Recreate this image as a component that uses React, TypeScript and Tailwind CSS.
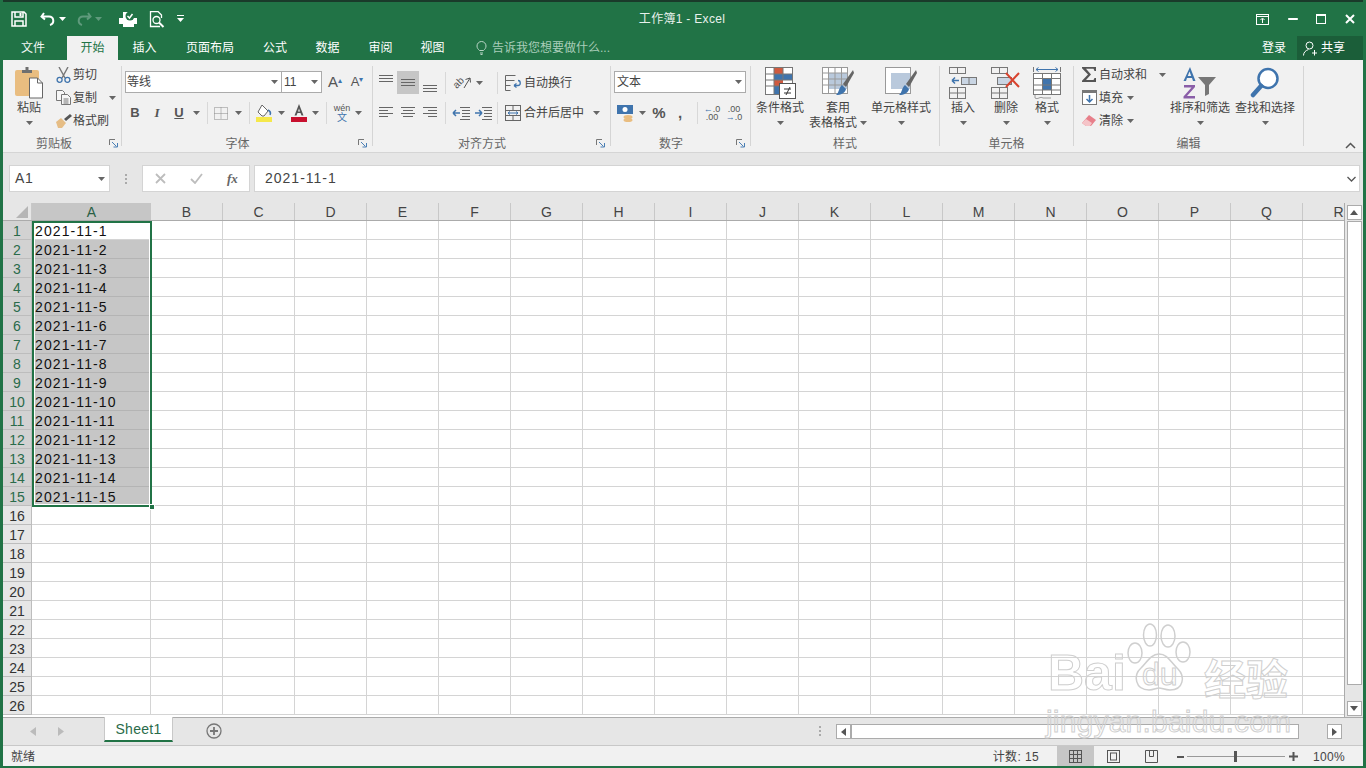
import React from "react";

const columns = ["B", "C", "D", "E", "F", "G", "H", "I", "J", "K", "L", "M", "N", "O", "P", "Q", "R"];
const rows = Array.from({ length: 26 }, (_, i) => i + 1);

function Caret({ className = "text-[#666]" }: { className?: string }) {
  return (
    <svg width="7" height="4" viewBox="0 0 7 4" className={className}>
      <path d="M0 0h7L3.5 4z" fill="currentColor" />
    </svg>
  );
}

function Sep({ className = "" }: { className?: string }) {
  return <div className={`w-px h-[22px] bg-[#d8d8d8] ${className}`} />;
}

function GroupSep() {
  return <div className="w-px my-[6px] bg-[#d5d5d5] shrink-0" />;
}

function Launcher() {
  return (
    <svg width="9" height="9" viewBox="0 0 9 9" fill="none" stroke="#777">
      <path d="M.5 6V.5H6" />
      <path d="M3 3l4.5 4.5M4.5 8h4V4" stroke="#4a7fb5" />
    </svg>
  );
}

function GroupLabel({ text, launcher = "" }: { text: string; launcher?: string }) {
  return (
    <div className="h-[17px] flex items-center shrink-0">
      <div className="flex-1 text-center text-[12px] leading-[16px] text-[#666]">{text}</div>
      {launcher && <div className={`${launcher} flex justify-center`}><Launcher /></div>}
    </div>
  );
}

function LargeButton({ width, icon, label, second, className = "" }: { width: string; icon: React.ReactNode; label: string; second?: string; className?: string }) {
  return (
    <div className={`${width} ${className} flex flex-col items-center shrink-0 pt-[7px]`}>
      <div className="h-[32px] flex items-center justify-center">{icon}</div>
      <div className="mt-[1px] text-[12px] leading-[16px] text-[#444] whitespace-nowrap">{label}</div>
      <div className="h-[14px] flex items-center gap-[3px] text-[12px] text-[#444] whitespace-nowrap">
        {second}
        <Caret />
      </div>
    </div>
  );
}

function SmallButton({ icon, label, caret, gap = "ml-[12px]" }: { icon: React.ReactNode; label: string; caret?: boolean; gap?: string }) {
  return (
    <div className="h-[23px] flex items-center">
      <div className="w-[18px] flex justify-center">{icon}</div>
      <span className="ml-[1px] text-[12px] leading-[16px] text-[#444] whitespace-nowrap">{label}</span>
      {caret && <span className={`${gap} flex`}><Caret /></span>}
    </div>
  );
}

function Lines({ d }: { d: string }) {
  return (
    <svg width="16" height="14" viewBox="0 0 16 14" fill="none" stroke="#666">
      <path d={d} />
    </svg>
  );
}

function SaveIcon() {
  return (
    <svg width="16" height="16" viewBox="0 0 16 16" fill="none" stroke="#fff" strokeWidth="1.5">
      <path d="M1 1h12l2 2v12H1z" />
      <path d="M4 1v5h8V1M4 15v-5h8v5" />
      <rect x="8.5" y="2" width="2" height="3" fill="#fff" stroke="none" />
    </svg>
  );
}

function PasteIcon() {
  return (
    <svg width="30" height="33" viewBox="0 0 30 33">
      <rect x="1" y="3" width="24" height="26" rx="2" fill="#e9bd80" />
      <path d="M8 6V3h3.5V0h3v3H18v3z" fill="#6f6f6f" />
      <path d="M15.5 11h8l5 5v15h-13z" fill="#fff" stroke="#666" />
      <path d="M23.5 11v5h5" fill="none" stroke="#666" />
    </svg>
  );
}

function ScissorsIcon() {
  return (
    <svg width="15" height="16" viewBox="0 0 15 16" fill="none">
      <path d="M3 0l6 11M12 0L6 11" stroke="#777" strokeWidth="1.4" />
      <circle cx="3.6" cy="12.8" r="2.5" stroke="#3f74ad" strokeWidth="1.3" />
      <circle cx="11.4" cy="12.8" r="2.5" stroke="#3f74ad" strokeWidth="1.3" />
    </svg>
  );
}

function CopyIcon() {
  return (
    <svg width="15" height="15" viewBox="0 0 15 15" fill="#f7f7f7" stroke="#777">
      <path d="M.5.5h6l2 2v8h-8z" />
      <path d="M5.5 4.5h6l3 3v7h-9z" />
      <path d="M7.5 9h5M7.5 11h5M7.5 13h5" />
    </svg>
  );
}

function BrushIcon() {
  return (
    <svg width="17" height="14" viewBox="0 0 17 14">
      <path d="M1 8l5-4 5 5-4 5H3z" fill="#e6bd85" />
      <path d="M9 5l6-5 2 2-6 5z" fill="#555" />
    </svg>
  );
}

function FillIcon() {
  return (
    <svg width="18" height="18" viewBox="0 0 18 18" fill="none">
      <path d="M7 1l6 6-4 5H7L3 8z" fill="#fff" stroke="#666" />
      <path d="M13 6c2 1 3 3 2 5" stroke="#3f74ad" strokeWidth="1.5" />
      <rect x="1" y="13" width="16" height="5" fill="#f5e84a" />
    </svg>
  );
}

function FontColorIcon() {
  return (
    <svg width="16" height="18" viewBox="0 0 16 18">
      <path d="M8 0l4.5 11.5h-2L9.5 9h-3l-1 2.5h-2zM7 7.4h2L8 4.5z" fill="#555" />
      <rect x="0" y="13" width="16" height="5" fill="#c8102e" />
    </svg>
  );
}

function WrapIcon() {
  return (
    <svg width="17" height="16" viewBox="0 0 17 16" fill="none" stroke="#666">
      <path d="M.5.5h10M.5 5.5h9M.5 10.5h5M.5.5v15h5" />
      <path d="M9 10.5h4c3 0 3-5 0-5" stroke="#3f74ad" strokeWidth="1.3" />
      <path d="M9 10.5l2.5-2M9 10.5l2.5 2" stroke="#3f74ad" strokeWidth="1.3" />
    </svg>
  );
}

function MergeIcon() {
  return (
    <svg width="16" height="16" viewBox="0 0 16 16" fill="none" stroke="#666">
      <rect x=".5" y=".5" width="15" height="15" />
      <path d="M.5 5.5h15M.5 10.5h15M8 .5v5M8 10.5v5" />
      <path d="M3 8h10M3 8l2-1.500M3 8l2 1.500M13 8l-2-1.500M13 8l-2 1.500" stroke="#3f74ad" />
    </svg>
  );
}

function CondIcon() {
  return (
    <svg width="31" height="32" viewBox="0 0 31 32" fill="none">
      <rect x=".5" y=".5" width="27" height="27" fill="#fff" stroke="#777" />
      <rect x="9" y="1" width="9" height="6" fill="#cf5a3f" />
      <rect x="9" y="7" width="18" height="6" fill="#3f74ad" />
      <rect x="9" y="13" width="9" height="6" fill="#cf5a3f" />
      <rect x="9" y="19" width="6" height="8" fill="#3f74ad" />
      <path d="M9 .5v27M18 .5v12M.5 7h27M.5 13h27M.5 19h14" stroke="#777" />
      <rect x="14.500" y="16.500" width="16" height="15" fill="#fff" stroke="#555" />
      <path d="M19 22h7M19 26h7M25 20l-4 8" stroke="#333" />
    </svg>
  );
}

function TableStyleIcon({ plain }: { plain?: boolean }) {
  return (
    <svg width="32" height="32" viewBox="0 0 32 32" fill="none">
      <rect x=".5" y=".5" width="25" height="26" fill="#fff" stroke="#999" />
      <rect x="6" y="6" width="19" height="16" fill="#b9c9dc" />
      {!plain && <path d="M.5 6h25M.5 12h25M.5 18h25M6.500.5v26M13 .5v26M19.500.5v26" stroke="#999" />}
      <path d="M31 3L21 17l3 3L32 6z" fill="#666" />
      <path d="M20 18l4 4c-1 4-5 6-10 6 3-2 3-8 6-10z" fill="#3f74ad" />
    </svg>
  );
}

function InsertIcon() {
  return (
    <svg width="28" height="32" viewBox="0 0 28 32" fill="none" stroke="#777">
      <rect x=".5" y=".5" width="16" height="6" />
      <path d="M8.500.5v6" />
      <path d="M10 13.500H3M3 13.500l3-3M3 13.500l3 3" stroke="#3f74ad" strokeWidth="1.500" />
      <rect x="12.500" y="10.500" width="15" height="7" fill="#c9d5e3" />
      <path d="M20 10.500v7" />
      <rect x=".5" y="20.500" width="16" height="11" />
      <path d="M8.500 20.500v11M.5 26h16" />
    </svg>
  );
}

function DeleteIcon() {
  return (
    <svg width="30" height="32" viewBox="0 0 30 32" fill="none" stroke="#777">
      <rect x=".5" y=".5" width="16" height="6" />
      <path d="M8.500.5v6" />
      <rect x="6.500" y="10.500" width="14" height="7" fill="#c9d5e3" />
      <rect x=".5" y="20.500" width="16" height="11" />
      <path d="M8.500 20.500v11M.5 26h16" />
      <path d="M15 6l13 14M28 6L15 20" stroke="#d8432e" strokeWidth="2" />
    </svg>
  );
}

function FormatIcon() {
  return (
    <svg width="28" height="33" viewBox="0 0 28 33" fill="none" stroke="#777">
      <path d="M.5 0v5M27.500 0v5" />
      <path d="M3 2.500h22M3 2.500l2.500-2M3 2.500l2.500 2M25 2.500l-2.500-2M25 2.500l-2.500 2" stroke="#3f74ad" />
      <rect x=".5" y="6.500" width="27" height="21" fill="#fff" />
      <rect x="10" y="11" width="8" height="12" fill="#3f74ad" stroke="none" />
      <path d="M.5 11.500h27M.5 18h27M.5 23h27M9.500 6.500v21M18.500 6.500v21" />
      <path d="M2 28v3c3 2 5-2 8 0l8 0" stroke="#999" />
    </svg>
  );
}

function SortIcon() {
  return (
    <svg width="34" height="33" viewBox="0 0 34 33">
      <path d="M7 0l5.500 14h-2.500l-1-3H4l-1 3H.5zM4.800 9h3.400L6.500 4.500z" fill="#3f74ad" />
      <path d="M1 18h11v2l-8 9h8v2.500H.5v-2l8-9H1z" fill="#8a5ea8" />
      <path d="M15 10h18l-7 8v9l-4 2V18z" fill="#777" />
    </svg>
  );
}

function SearchIcon() {
  return (
    <svg width="30" height="32" viewBox="0 0 30 32" fill="none">
      <circle cx="18" cy="11.500" r="9.500" stroke="#3f74ad" strokeWidth="2.500" fill="#fff" />
      <path d="M11 19L3 28" stroke="#3f74ad" strokeWidth="4.500" strokeLinecap="round" />
    </svg>
  );
}

function Ribbon() {
  return (
    <div className="h-[93px] bg-[#f1f1f1] flex shrink-0 border-b border-[#d5d5d5]">
      {/* clipboard */}
      <div className="w-[118px] flex flex-col shrink-0">
        <div className="h-[75px] flex">
          <LargeButton width="w-[50px]" icon={<PasteIcon />} label="粘贴" className="ml-[1px]" />
          <div className="pt-[3px]">
            <SmallButton icon={<ScissorsIcon />} label="剪切" />
            <SmallButton icon={<CopyIcon />} label="复制" caret />
            <SmallButton icon={<BrushIcon />} label="格式刷" />
          </div>
        </div>
        <GroupLabel text="剪贴板" launcher="w-[16px]" />
      </div>
      <GroupSep />
      {/* font */}
      <div className="w-[250px] flex flex-col shrink-0">
        <div className="h-[75px] pt-[11px]">
          <div className="flex items-center h-[22px] pl-[3px]">
            <div className="w-[157px] h-[22px] bg-white border border-[#ababab] flex items-center justify-between pl-[1px] pr-[3px] text-[12px] text-[#444]">
              等线
              <Caret />
            </div>
            <div className="w-[41px] h-[22px] -ml-px bg-white border border-[#ababab] flex items-center justify-between pl-[2px] pr-[3px] text-[12px] text-[#444]">
              11
              <Caret />
            </div>
            <div className="w-[24px] ml-[1px] text-center text-[15px] leading-[16px] text-[#555]">A<sup className="text-[#3f74ad] text-[8px]">▴</sup></div>
            <div className="w-[20px] text-center text-[13px] leading-[16px] text-[#555]">A<sup className="text-[#3f74ad] text-[8px]">▾</sup></div>
          </div>
          <div className="flex items-center h-[22px] mt-[9px] pl-[2px] text-[#555]">
            <div className="w-[22px] text-center font-bold text-[13px]">B</div>
            <div className="w-[22px] text-center italic font-['Liberation_Serif',serif] font-bold text-[13px]">I</div>
            <div className="w-[22px] text-center underline font-bold text-[13px]">U</div>
            <div className="w-[12px] flex justify-center"><Caret /></div>
            <Sep className="ml-[5px]" />
            <div className="w-[20px] ml-[3px] flex justify-center">
              <svg width="14" height="13" viewBox="0 0 14 13" fill="none" stroke="#888" strokeDasharray="1 1"><rect x=".5" y=".5" width="13" height="12" /><path d="M7 .5v12M.5 6.500h13" /></svg>
            </div>
            <div className="w-[14px] flex justify-center"><Caret /></div>
            <Sep className="ml-[4px]" />
            <div className="w-[20px] ml-[4px] flex justify-center"><FillIcon /></div>
            <div className="w-[14px] flex justify-center"><Caret /></div>
            <div className="w-[20px] ml-[1px] flex justify-center"><FontColorIcon /></div>
            <div className="w-[12px] flex justify-center"><Caret /></div>
            <Sep className="ml-[5px]" />
            <div className="w-[20px] ml-[5px] flex flex-col items-center leading-none">
              <span className="text-[9px] leading-[9px] text-[#555]">wén</span>
              <span className="text-[10px] leading-[10px] text-[#3f74ad]">文</span>
            </div>
            <div className="w-[12px] flex justify-center"><Caret /></div>
          </div>
        </div>
        <GroupLabel text="字体" launcher="w-[19px]" />
      </div>
      <GroupSep />
      {/* alignment */}
      <div className="w-[237px] flex flex-col shrink-0">
        <div className="h-[75px] pt-[11px]">
          <div className="flex items-center h-[23px] pl-[2px]">
            <div className="w-[22px] h-[23px] flex justify-center pt-[3px]"><Lines d="M1 1.500h14M1 4.500h14M1 7.500h14" /></div>
            <div className="w-[22px] h-[23px] flex justify-center items-center bg-[#c6c6c6]"><Lines d="M1 3.500h14M1 6.500h14M1 9.500h14" /></div>
            <div className="w-[22px] h-[23px] flex justify-center items-end pb-[1px]"><Lines d="M1 6.500h14M1 9.500h14M1 12.500h14" /></div>
            <Sep className="ml-[4px]" />
            <div className="w-[24px] ml-[4px] flex justify-center items-center">
              <span className="-rotate-45 text-[10px] leading-[10px] text-[#555]">ab</span>
              <svg width="8" height="12" viewBox="0 0 8 12" fill="none" stroke="#555" className="-ml-[1px]"><path d="M1 11L7 1M7 1L2.500 2.500M7 1l.5 4.500" /></svg>
            </div>
            <div className="w-[10px] flex justify-center"><Caret /></div>
            <Sep className="ml-[13px]" />
            <div className="w-[18px] ml-[6px] flex justify-center"><WrapIcon /></div>
            <span className="ml-[2px] text-[12px] leading-[16px] text-[#444] whitespace-nowrap">自动换行</span>
          </div>
          <div className="flex items-center h-[22px] mt-[8px] pl-[2px]">
            <div className="w-[22px] flex justify-center"><Lines d="M1 1.500h14M1 4.500h9M1 7.500h14M1 10.500h9" /></div>
            <div className="w-[22px] flex justify-center"><Lines d="M1 1.500h14M3 4.500h10M1 7.500h14M3 10.500h10" /></div>
            <div className="w-[22px] flex justify-center"><Lines d="M1 1.500h14M6 4.500h9M1 7.500h14M6 10.500h9" /></div>
            <Sep className="ml-[4px]" />
            <div className="w-[22px] ml-[4px] flex justify-center">
              <svg width="18" height="14" viewBox="0 0 18 14" fill="none" stroke="#666"><path d="M8 1.500h10M10 4.500h8M10 7.500h8M10 10.500h8M8 13.500h10" /><path d="M8 7H1M1 7l3-3M1 7l3 3" stroke="#3f74ad" strokeWidth="1.500" /></svg>
            </div>
            <div className="w-[22px] flex justify-center">
              <svg width="18" height="14" viewBox="0 0 18 14" fill="none" stroke="#666"><path d="M8 1.500h10M10 4.500h8M10 7.500h8M10 10.500h8M8 13.500h10" /><path d="M1 7h7M8 7L5 4M8 7l-3 3" stroke="#3f74ad" strokeWidth="1.500" /></svg>
            </div>
            <Sep className="ml-[3px]" />
            <div className="w-[18px] ml-[6px] flex justify-center"><MergeIcon /></div>
            <span className="ml-[2px] text-[12px] leading-[16px] text-[#444] whitespace-nowrap">合并后居中</span>
            <div className="ml-[9px] flex"><Caret /></div>
          </div>
        </div>
        <GroupLabel text="对齐方式" launcher="w-[19px]" />
      </div>
      <GroupSep />
      {/* number */}
      <div className="w-[139px] flex flex-col shrink-0">
        <div className="h-[75px] pt-[11px]">
          <div className="ml-[3px] w-[132px] h-[22px] bg-white border border-[#ababab] flex items-center justify-between pl-[2px] pr-[3px] text-[12px] text-[#444]">
            文本
            <Caret />
          </div>
          <div className="flex items-center h-[22px] mt-[9px] pl-[4px]">
            <div className="w-[22px] flex justify-center">
              <svg width="18" height="18" viewBox="0 0 18 18"><rect x="0" y="1" width="16" height="9" fill="#3f74ad" /><circle cx="8" cy="5.500" r="2.500" fill="#fff" /><ellipse cx="11" cy="13" rx="4.500" ry="2" fill="#e9bd80" /><ellipse cx="11" cy="16" rx="4.500" ry="2" fill="#e9bd80" /></svg>
            </div>
            <div className="w-[10px] flex justify-center"><Caret /></div>
            <div className="w-[24px] text-center font-bold text-[15px] leading-[18px] text-[#555]">%</div>
            <div className="w-[20px] -ml-[1px] text-center font-bold text-[15px] leading-[14px] text-[#555]">,</div>
            <Sep className="ml-[7px]" />
            <div className="w-[22px] ml-[3px] flex flex-col items-center text-[9px] leading-[8px] text-[#555]">
              <span><span className="text-[#3f74ad]">←</span>.0</span>
              <span>.00</span>
            </div>
            <div className="w-[22px] flex flex-col items-center text-[9px] leading-[8px] text-[#555]">
              <span>.00</span>
              <span><span className="text-[#3f74ad]">→</span>.0</span>
            </div>
          </div>
        </div>
        <GroupLabel text="数字" launcher="w-[19px]" />
      </div>
      <GroupSep />
      {/* styles */}
      <div className="w-[188px] flex flex-col shrink-0">
        <div className="h-[75px] flex">
          <LargeButton width="w-[58px]" icon={<CondIcon />} label="条件格式" />
          <LargeButton width="w-[58px]" icon={<TableStyleIcon />} label="套用" second="表格格式" />
          <LargeButton width="w-[68px]" icon={<TableStyleIcon plain />} label="单元格样式" />
        </div>
        <GroupLabel text="样式" />
      </div>
      <GroupSep />
      {/* cells */}
      <div className="w-[133px] flex flex-col shrink-0">
        <div className="h-[75px] flex">
          <LargeButton width="w-[46px]" icon={<InsertIcon />} label="插入" />
          <LargeButton width="w-[40px]" icon={<DeleteIcon />} label="删除" />
          <LargeButton width="w-[42px]" icon={<FormatIcon />} label="格式" />
        </div>
        <GroupLabel text="单元格" />
      </div>
      <GroupSep />
      {/* editing */}
      <div className="w-[229px] flex flex-col shrink-0">
        <div className="h-[75px] flex">
          <div className="w-[96px] pt-[3px] pl-[6px] shrink-0">
            <SmallButton
              icon={<svg width="15" height="15" viewBox="0 0 15 15"><path d="M0 0h14v4h-1.500l-1-2.300H4l5 5.800L4 13h7.500l1-2h1.500v4H0v-1.200L6 7.500 0 1.200z" fill="#555" /></svg>}
              label="自动求和"
              caret
            />
            <SmallButton
              icon={<svg width="15" height="15" viewBox="0 0 15 15" fill="none"><rect x=".5" y=".5" width="14" height="14" fill="#fff" stroke="#777" /><rect x="0" y="0" width="15" height="3" fill="#777" /><path d="M7.500 5v7M4.500 9l3 3 3-3" stroke="#3f74ad" strokeWidth="1.500" /></svg>}
              label="填充"
              caret
              gap="ml-[4px]"
            />
            <SmallButton
              icon={<svg width="16" height="14" viewBox="0 0 16 14"><path d="M8 1l7 5-5 6H5L1 9z" fill="#e77f8a" /><path d="M1 9l4-4 6 4-2 3H5z" fill="#f5c4c8" /></svg>}
              label="清除"
              caret
              gap="ml-[4px]"
            />
          </div>
          <LargeButton width="w-[60px]" icon={<SortIcon />} label="排序和筛选" />
          <LargeButton width="w-[64px]" icon={<SearchIcon />} label="查找和选择" className="ml-[3px]" />
        </div>
        <GroupLabel text="编辑" />
      </div>
      <GroupSep />
      <div className="flex-1 flex items-end justify-end pr-[7px] pb-[3px]">
        <svg width="11" height="7" viewBox="0 0 11 7" fill="none" stroke="#555" strokeWidth="1.500"><path d="M1 6l4.500-4.500L10 6" /></svg>
      </div>
    </div>
  );
}

function Sheet() {
  return (
    <div className="relative flex-1 min-w-0 overflow-hidden bg-white">
      <div className="flex h-[18px] bg-[#e6e6e6] border-b border-[#ababab]">
        <div className="w-[29px] shrink-0 flex items-end justify-end pr-[3px] pb-[2px] border-r border-[#c8c8c8]">
          <svg width="12" height="12" viewBox="0 0 12 12"><path d="M12 0v12H0z" fill="#b5b5b5" /></svg>
        </div>
        <div className="w-[119px] shrink-0 bg-[#c6c6c6] text-center text-[14px] leading-[18px] text-[#2a5f45]">A</div>
        {columns.map((c) => (
          <div key={c} className="w-[72px] shrink-0 border-r border-[#c8c8c8] text-center text-[14px] leading-[18px] text-[#444]">
            {c}
          </div>
        ))}
      </div>
      {rows.map((r) => {
        const selected = r <= 15;
        return (
          <div key={r} className="flex h-[19px]">
            <div className={`w-[29px] shrink-0 border-b border-r border-[#bdbdbd] text-center text-[14px] leading-[20px] ${selected ? "bg-[#d2d2d2] text-[#2a6b4a]" : "bg-[#e6e6e6] text-[#333]"}`}>
              {r}
            </div>
            <div className={`w-[119px] shrink-0 border-b border-r pl-[3px] text-[14px] leading-[21px] tracking-[1.1px] text-[#111] ${selected && r > 1 ? "bg-[#c6c6c6] border-[#b4b4b4]" : "border-[#d4d4d4]"}`}>
              {selected ? `2021-11-${r}` : ""}
            </div>
            {columns.map((c) => (
              <div key={c} className="w-[72px] shrink-0 border-b border-r border-[#d4d4d4]" />
            ))}
          </div>
        );
      })}
      {/* selection frame */}
      <div className="absolute left-[29px] top-[18px] w-[120px] h-[286px] border-2 border-[#217346] shadow-[inset_0_0_0_1px_#fff] pointer-events-none" />
      <div className="absolute left-[146px] top-[301px] w-[6px] h-[6px] bg-[#217346] border border-white" />
    </div>
  );
}

function Watermark() {
  return (
    <div className="absolute left-[1042px] top-[618px] w-[256px] h-[124px] pointer-events-none font-['Liberation_Sans',sans-serif]">
      <svg width="90" height="76" viewBox="0 0 90 76" fill="none" stroke="#cfcfcf" strokeWidth="1.500" className="absolute left-[76px] top-[2px]">
        <ellipse cx="32" cy="15" rx="6.500" ry="11" />
        <ellipse cx="50" cy="16" rx="7" ry="11" />
        <ellipse cx="17" cy="33" rx="7" ry="10" />
        <ellipse cx="65" cy="32" rx="7" ry="10" />
        <path d="M41 34c-8 0-12 8-18 14-8 7-6 22 8 22 5 0 7-2 10-2s6 2 11 2c14 0 15-14 8-21-7-6-10-15-19-15z" />
      </svg>
      <div className="absolute left-[6px] top-[25px] text-[50px] leading-[60px] font-bold text-transparent [-webkit-text-stroke:1px_#cfcfcf]">Bai</div>
      <div className="absolute left-[100px] top-[36px] text-[32px] leading-[40px] text-transparent [-webkit-text-stroke:1px_#cfcfcf]">du</div>
      <div className="absolute left-[162px] top-[35px] text-[42px] leading-[48px] font-['Noto_Sans_CJK_SC',sans-serif] font-bold text-transparent [-webkit-text-stroke:1px_#cfcfcf]">经验</div>
      <div className="absolute left-[4px] top-[86px] text-[30px] leading-[36px] tracking-[0.2px] text-transparent [-webkit-text-stroke:1px_#cfcfcf]">jingyan.baidu.com</div>
    </div>
  );
}

export default function App() {
  return (
    <div className="relative w-[1366px] h-[768px] overflow-hidden flex flex-col bg-[#217346] border-x-[3px] border-b-2 border-[#217346] font-['Liberation_Sans','Noto_Sans_CJK_SC',sans-serif]">
      {/* title bar */}
      <div className="h-[36px] shrink-0 flex items-center text-white border-t-2 border-[#1a3a2a] -mx-[3px] px-[3px]">
        <div className="w-[8px]" />
        <SaveIcon />
        <svg width="16" height="14" viewBox="0 0 16 14" fill="none" stroke="#fff" strokeWidth="2" className="ml-[13px]"><path d="M4 1L1.500 4.500 5 7.500M2 4.500h7c5 0 6 7 1 8.500" /></svg>
        <span className="ml-[3px] flex"><Caret className="text-white" /></span>
        <svg width="16" height="14" viewBox="0 0 16 14" fill="none" stroke="#5f9a7c" strokeWidth="2" className="ml-[10px]"><path d="M12 1l2.500 3.500L11 7.500M14 4.500H7c-5 0-6 7-1 8.500" /></svg>
        <span className="ml-[3px] flex"><Caret className="text-[#5f9a7c]" /></span>
        <svg width="18" height="17" viewBox="0 0 18 17" className="ml-[17px]"><path d="M0 7h18v6h-3v3H4v-3H0z" fill="#fff" /><path d="M4 1h8l2 2v5H4z" fill="#fff" /><circle cx="11" cy="5" r="4.500" fill="#217346" /><path d="M8.500 5l2 2 3-4" stroke="#fff" strokeWidth="1.500" fill="none" /></svg>
        <svg width="17" height="17" viewBox="0 0 17 17" fill="none" stroke="#fff" className="ml-[12px]"><path d="M11 15.500H1.500V.5H9l3.500 3.500v3" strokeWidth="1.300" /><circle cx="7.500" cy="9" r="3.500" strokeWidth="1.300" /><path d="M10 11.500l4.500 4.500" strokeWidth="2" /></svg>
        <svg width="7" height="8" viewBox="0 0 7 8" className="ml-[11px]"><rect width="7" height="1" y="0" fill="#fff" /><path d="M0 3h7L3.500 7z" fill="#fff" /></svg>
        <div className="flex-1 text-center text-[12px] leading-[16px] pr-[76px] text-[#e8f1ec] tracking-[0.3px]">工作簿1 - Excel</div>
        <svg width="13" height="11" viewBox="0 0 13 11" fill="none" stroke="#fff"><rect x=".5" y=".5" width="12" height="10" /><path d="M.5 2.500h12M6.500 9V4.500M4.500 6l2-2 2 2" /></svg>
        <div className="w-[16px] h-[2px] bg-white ml-[16px] scale-x-[0.6]" />
        <div className="w-[10px] h-[10px] ml-[15px] border border-white border-t-[2px]" />
        <svg width="10" height="10" viewBox="0 0 10 10" stroke="#fff" strokeWidth="2" className="ml-[19px] mr-[8px]"><path d="M1 1l8 8M9 1l-8 8" /></svg>
      </div>
      {/* tabs */}
      <div className="h-[24px] shrink-0 flex items-center text-[12px] text-white">
        <div className="w-[60px] pl-[18px] leading-[24px] text-[#f1f7f3]">文件</div>
        <div className="w-[4px]" />
        <div className="w-[51px] h-[24px] bg-[#f1f1f1] text-[#217346] text-center leading-[24px]">开始</div>
        <div className="w-[53px] text-center">插入</div>
        <div className="w-[78px] text-center">页面布局</div>
        <div className="w-[52px] text-center">公式</div>
        <div className="w-[53px] text-center">数据</div>
        <div className="w-[53px] text-center">审阅</div>
        <div className="w-[51px] text-center">视图</div>
        <svg width="11" height="14" viewBox="0 0 11 14" fill="none" stroke="#b9d6c6" className="ml-[18px]"><path d="M3.500 9.500C2 8 1 7 1 5a4.500 4.500 0 019 0c0 2-1 3-2.500 4.500zM4 12h3M4.500 13.500h2" /></svg>
        <span className="ml-[5px] text-[#a9cdb9]">告诉我您想要做什么...</span>
        <div className="flex-1" />
        <span className="mr-[11px]">登录</span>
        <div className="w-[69px] h-[24px] -mr-[3px] bg-[#1b5e39] flex items-center pl-[6px] gap-[3px]">
          <svg width="15" height="15" viewBox="0 0 15 15" fill="none" stroke="#fff"><circle cx="6.500" cy="4.500" r="3.500" /><path d="M.5 14.500c0-3 2-5 5-6M11.500 9v5.500M9 12h5" /></svg>
          共享
        </div>
      </div>
      <Ribbon />
      {/* formula bar */}
      <div className="h-[50px] shrink-0 bg-[#e6e6e6] flex items-start pt-[12px]">
        <div className="ml-[6px] w-[101px] h-[27px] bg-white border border-[#d4d4d4] flex items-center justify-between pl-[5px] pr-[4px] text-[14px] tracking-[0.6px] text-[#444]">
          A1
          <Caret />
        </div>
        <div className="w-[32px] h-[27px] flex justify-center items-center">
          <div className="flex flex-col gap-[2px]">
            <span className="w-[2px] h-[2px] bg-[#aaa]" />
            <span className="w-[2px] h-[2px] bg-[#aaa]" />
            <span className="w-[2px] h-[2px] bg-[#aaa]" />
          </div>
        </div>
        <div className="w-[108px] h-[27px] bg-white border border-[#d4d4d4] flex items-center text-[#bbb]">
          <svg width="11" height="11" viewBox="0 0 11 11" stroke="#bdbdbd" strokeWidth="1.800" className="ml-[12px]"><path d="M1 1l9 9M10 1l-9 9" /></svg>
          <svg width="13" height="11" viewBox="0 0 13 11" fill="none" stroke="#bdbdbd" strokeWidth="1.800" className="ml-[24px]"><path d="M1 6l4 4 7-9" /></svg>
          <span className="ml-[24px] font-['Liberation_Serif',serif] italic font-bold text-[13px] text-[#666]">fx</span>
        </div>
        <div className="ml-[4px] w-[1106px] h-[27px] bg-white border border-[#d4d4d4] flex items-center justify-between pl-[10px] pr-[3px] text-[14px] tracking-[1px] text-[#444]">
          2021-11-1
          <svg width="9" height="6" viewBox="0 0 9 6" fill="none" stroke="#555" strokeWidth="1.300"><path d="M.5 1L4.500 5l4-4" /></svg>
        </div>
      </div>
      {/* grid */}
      <div className="h-[514px] shrink-0 flex bg-[#e6e6e6]">
        <Sheet />
        <div className="w-[19px] shrink-0 bg-[#e6e6e6] border-l border-[#ababab] flex flex-col items-center pt-[2px]">
          <div className="w-[15px] h-[15px] bg-white border border-[#ababab] flex items-center justify-center">
            <svg width="8" height="5" viewBox="0 0 8 5"><path d="M0 5h8L4 0z" fill="#555" /></svg>
          </div>
          <div className="w-[15px] h-[464px] mt-[1px] bg-white border border-[#ababab]" />
          <div className="flex-1" />
          <div className="w-[15px] h-[15px] mb-[1px] bg-white border border-[#ababab] flex items-center justify-center">
            <svg width="8" height="5" viewBox="0 0 8 5"><path d="M0 0h8L4 5z" fill="#555" /></svg>
          </div>
        </div>
      </div>
      {/* sheet tabs */}
      <div className="h-[28px] shrink-0 bg-[#e6e6e6] border-t border-[#ababab] flex items-start">
        <svg width="6" height="9" viewBox="0 0 6 9" className="ml-[27px] mt-[9px]"><path d="M6 0v9L0 4.500z" fill="#bbb" /></svg>
        <svg width="6" height="9" viewBox="0 0 6 9" className="ml-[22px] mt-[9px]"><path d="M0 0v9l6-4.500z" fill="#bbb" /></svg>
        <div className="ml-[40px] w-[69px] h-[25px] -mt-px bg-white border-x border-b-2 border-x-[#c8c8c8] border-b-[#217346] text-center text-[14px] leading-[24px] tracking-[0.3px] text-[#2a6b4a]">
          Sheet1
        </div>
        <svg width="16" height="16" viewBox="0 0 16 16" fill="none" stroke="#777" className="ml-[33px] mt-[5px]"><circle cx="8" cy="8" r="7" strokeWidth="1.300" /><path d="M8 4v8M4 8h8" strokeWidth="1.800" /></svg>
        <div className="ml-[597px] mt-[8px] flex flex-col gap-[2px] w-[2px]">
          <span className="w-[2px] h-[2px] bg-[#aaa]" />
          <span className="w-[2px] h-[2px] bg-[#aaa]" />
          <span className="w-[2px] h-[2px] bg-[#aaa]" />
        </div>
        <div className="ml-[15px] mt-[6px] w-[506px] h-[15px] flex">
          <div className="w-[15px] h-[15px] bg-white border border-[#ababab] flex items-center justify-center">
            <svg width="5" height="8" viewBox="0 0 5 8"><path d="M5 0v8L0 4z" fill="#555" /></svg>
          </div>
          <div className="w-[448px] h-[15px] bg-white border border-[#ababab]" />
          <div className="flex-1" />
          <div className="w-[15px] h-[15px] bg-white border border-[#ababab] flex items-center justify-center">
            <svg width="5" height="8" viewBox="0 0 5 8"><path d="M0 0v8l5-4z" fill="#555" /></svg>
          </div>
        </div>
      </div>
      {/* status bar */}
      <div className="flex-1 bg-[#f1f1f1] border-t border-[#c8c8c8] flex items-center text-[12px] text-[#444]">
        <span className="ml-[8px]">就绪</span>
        <div className="flex-1" />
        <span className="tracking-[0.4px]">计数: 15</span>
        <div className="ml-[18px] w-[37px] h-[21px] bg-[#c6c6c6] flex items-center justify-center">
          <svg width="13" height="13" viewBox="0 0 13 13" fill="none" stroke="#555"><rect x=".5" y=".5" width="12" height="12" /><path d="M4.500.5v12M8.500.5v12M.5 4.500h12M.5 8.500h12" /></svg>
        </div>
        <div className="w-[39px] flex justify-center">
          <svg width="13" height="13" viewBox="0 0 13 13" fill="none" stroke="#555"><rect x=".5" y=".5" width="12" height="12" /><rect x="3.500" y="3" width="6" height="7" /></svg>
        </div>
        <div className="w-[37px] flex justify-center">
          <svg width="13" height="13" viewBox="0 0 13 13" fill="none" stroke="#555"><path d="M.5 12.500V.5h12v12zM4.500.5v6h4v-6" /></svg>
        </div>
        <div className="ml-[7px] w-[7px] h-[2px] bg-[#555]" />
        <div className="relative ml-[3px] w-[98px] h-px bg-[#999]">
          <div className="absolute left-[47px] -top-[5px] w-[3px] h-[11px] bg-[#555]" />
        </div>
        <svg width="9" height="9" viewBox="0 0 9 9" stroke="#555" strokeWidth="2" className="ml-[4px]"><path d="M4.500 0v9M0 4.500h9" /></svg>
        <span className="ml-[15px] mr-[18px] tracking-[0.3px]">100%</span>
      </div>
      <div className="absolute inset-0 -left-[3px]">
        <Watermark />
      </div>
    </div>
  );
}
